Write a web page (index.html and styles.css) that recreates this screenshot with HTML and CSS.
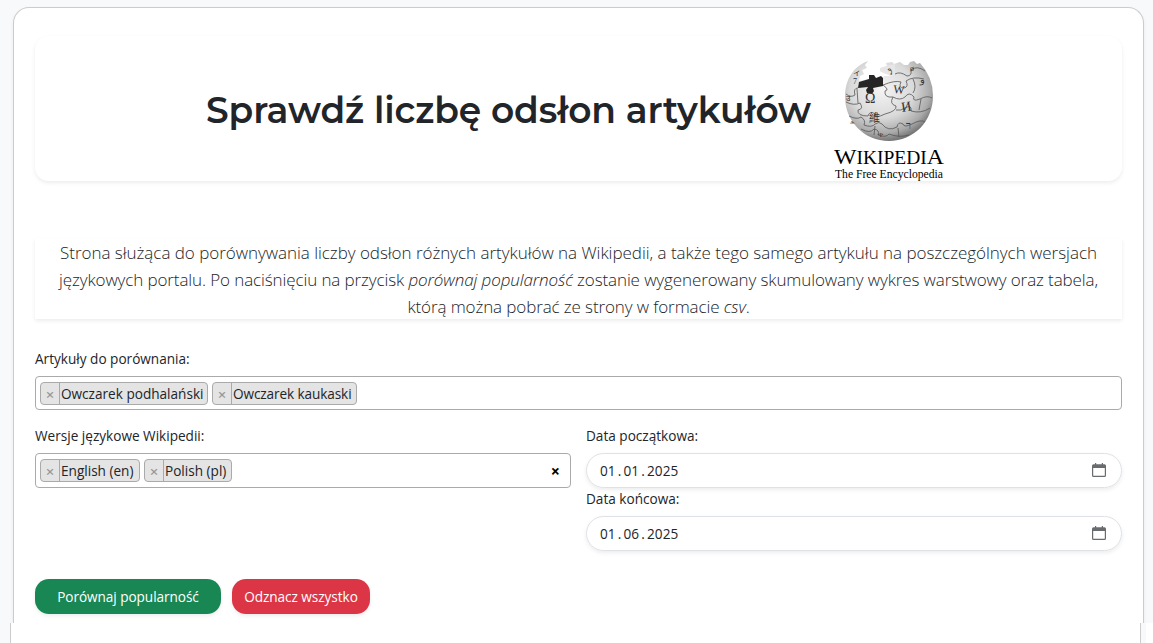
FILE: index.html
```html
<!DOCTYPE html>
<html lang="pl">
<head>
<meta charset="utf-8">
<title>Sprawdź liczbę odsłon artykułów</title>
<link rel="stylesheet" href="styles.css">
</head>
<body>
<main class="card">
  <header class="hero">
    <h1 class="title">Sprawdź liczbę odsłon artykułów</h1>
    <svg class="logo" width="112" height="124" viewBox="0 0 112 124" role="img" aria-label="Wikipedia">
      <defs>
        <radialGradient id="globe" cx="42%" cy="35%" r="65%">
          <stop offset="0" stop-color="#f4f4f4"/><stop offset=".55" stop-color="#dadada"/><stop offset=".85" stop-color="#aaa"/><stop offset="1" stop-color="#777"/>
        </radialGradient>
      </defs>
      <path d="M34 3L31 7L33 10L28 12L30 16L26 18L25 23L35 21L48 22L50 18L57 18L61 16L61 14L55 15L52 16L46 13L47 10L53 8L52 5L58 4L60 6L66 4L70 7L74 7L76 4L80 3L83 6L86 5Q99 19 99 38C99 63 80 83 55 83C30 83 11 63 11 39C11 21 20 8 34 3Z" fill="url(#globe)"/>
      <path d="M57 18L61 16L61 6L53 8L46 10L46 13L52 16Z" fill="#e6e6e6"/>
      <path d="M25 24L35 21L35 17L40 17L42 20L47 18L49 20L49 28L39 30L40 33L38 36L33 35L32 32L34 29L24 30Z" fill="#252525"/>
      <g class="seams" transform="translate(-1 1)">
        <path d="M13 35Q18 39 22 36Q20 29 25 29M50 26Q62 21 68 23Q65 29 71 29Q76 28 73 22Q80 17 91 20M62 15Q67 12 74 17Q79 17 78 11Q84 6 92 12"/>
        <path d="M13 43Q21 47 27 44Q31 50 25 51Q24 57 35 57Q37 51 42 55Q42 60 52 55Q64 52 63 47Q56 45 60 38Q51 39 52 32Q57 31 50 26"/>
        <path d="M60 38Q67 42 72 38Q76 32 81 38Q79 43 87 40Q94 36 99 39M63 51Q68 52 72 49Q79 45 78 52Q88 55 97 49"/>
        <path d="M16 57Q24 61 28 58Q33 61 31 66Q39 69 42 65Q46 62 49 65Q55 73 64 68Q65 62 70 65Q71 69 79 65Q88 60 92 63"/>
        <path d="M28 70Q37 75 41 70Q47 71 45 76Q53 79 56 75Q66 79 76 76M80 20Q84 28 80 34M42 67L41 76M88 40L86 51M65 69L66 78M24 30L25 44"/>
      </g>
      <g class="glyphs">
        <text x="31" y="45" font-size="14">Ω</text><text x="59" y="35" font-size="12" transform="rotate(5 59 35)">W</text>
        <text x="68" y="54" font-size="14" transform="rotate(-9 68 54)">И</text><text x="35" y="64" font-size="11" class="cjk">維</text>
        <text x="54" y="17" font-size="8">วิ</text><text x="76" y="13" font-size="8">ø</text><text x="86" y="25" font-size="10">و</text>
        <text x="72" y="71" font-size="10">ר</text><text x="19" y="17" font-size="8">ィ</text><text x="12" y="43" font-size="8">उ</text><text x="16" y="66" font-size="7">க</text><text x="44" y="79" font-size="7">ጥ</text><text x="19" y="26" font-size="8">7</text>
      </g>
      <g class="wordmark"><text x="0" y="105.5" textLength="110" lengthAdjust="spacingAndGlyphs"><tspan font-size="22">W</tspan><tspan font-size="18">IKIPEDI</tspan><tspan font-size="22">A</tspan></text></g>
      <text class="tagline" x="1" y="119.5" textLength="108" lengthAdjust="spacingAndGlyphs">The Free Encyclopedia</text>
    </svg>
  </header>
  <p class="intro"><span class="line l1">Strona służąca do porównywania liczby odsłon różnych artykułów na Wikipedii, a także tego samego artykułu na poszczególnych wersjach</span><span class="line l2">językowych portalu. Po naciśnięciu na przycisk <em>porównaj popularność</em> zostanie wygenerowany skumulowany wykres warstwowy oraz tabela,</span><span class="line l3">którą można pobrać ze strony w formacie <em>csv</em>.</span></p>
  <form class="form">
    <div class="field articles">
      <label class="label">Artykuły do porównania:</label>
      <div class="select short">
        <span class="tag podh"><span class="remove">×</span><span class="name">Owczarek podhalański</span></span>
        <span class="tag kauk"><span class="remove">×</span><span class="name">Owczarek kaukaski</span></span>
      </div>
    </div>
    <div class="columns">
      <div class="field">
        <label class="label">Wersje językowe Wikipedii:</label>
        <div class="select">
          <span class="tag eng"><span class="remove">×</span><span class="name">English (en)</span></span>
          <span class="tag pol"><span class="remove">×</span><span class="name">Polish (pl)</span></span>
          <span class="clear">×</span>
        </div>
      </div>
      <div class="field">
        <label class="label">Data początkowa:</label>
        <div class="date"><span class="digits"><span>01</span><i>.</i><span>01</span><i>.</i><span>2025</span></span>
          <svg class="calendar" width="14" height="15" viewBox="0 0 14 15"><path fill-rule="evenodd" d="M3 0h1.2v1.2h5.6V0H11v1.2h1.5Q14 1.2 14 2.7v9.8Q14 14 12.5 14h-11Q0 14 0 12.5V2.7Q0 1.2 1.5 1.2H3zM1.2 5v7.3q0 .5.5.5h10.6q.5 0 .5-.5V5z"/></svg>
        </div>
        <label class="label">Data końcowa:</label>
        <div class="date"><span class="digits"><span>01</span><i>.</i><span>06</span><i>.</i><span>2025</span></span>
          <svg class="calendar" width="14" height="15" viewBox="0 0 14 15"><path fill-rule="evenodd" d="M3 0h1.2v1.2h5.6V0H11v1.2h1.5Q14 1.2 14 2.7v9.8Q14 14 12.5 14h-11Q0 14 0 12.5V2.7Q0 1.2 1.5 1.2H3zM1.2 5v7.3q0 .5.5.5h10.6q.5 0 .5-.5V5z"/></svg>
        </div>
      </div>
    </div>
    <div class="actions">
      <button type="button" class="btn compare">Porównaj popularność</button>
      <button type="button" class="btn reset">Odznacz wszystko</button>
    </div>
  </form>
</main>
<section class="next"><div class="next-card"></div></section>
</body>
</html>
```

FILE: styles.css
```css
* { box-sizing: border-box; }
body { margin: 0; height: 643px; overflow: hidden; padding-top: 7px; background: #f8f9fa; color: #212529; font: 13.6px/21px "Open Sans", "Noto Sans", sans-serif; }
.card { width: 1131px; height: 616px; margin-left: 13px; padding: 28px 21px 0; background: #fff; border: 1px solid #ccc; border-bottom: 0; border-radius: 16px 16px 0 0; box-shadow: 0 2px 4px rgba(0,0,0,.06); }
.hero { display: flex; height: 145px; padding: 0 0 0 171px; border-radius: 14px; box-shadow: 0 2px 4px rgba(0,0,0,.075); }
.title { flex: none; width: 628px; margin: 52px 0 0; font: 600 36px/44px Montserrat, Inter, sans-serif; letter-spacing: -.1px; white-space: nowrap; }
.logo { flex: none; margin-top: 22px; }
.seams path { fill: none; stroke: #555; stroke-width: .8; }
.glyphs { fill: #333; font-family: "Liberation Serif", "Noto Sans", "Noto Sans CJK TC", serif; }
.wordmark { fill: #000; font-family: "Liberation Serif", serif; }
.tagline { fill: #000; font: 11.5px "Liberation Serif", serif; }
.intro { height: 81px; margin: 57px 0 0; padding-top: 1px; text-align: center; font-size: 17px; font-weight: 300; line-height: 27px; box-shadow: 0 2px 4px rgba(0,0,0,.075); white-space: nowrap; }
.line { display: block; }
.l1 { letter-spacing: -.03px; }
.l2, .l3 { letter-spacing: -.11px; }
.label { display: block; height: 21px; margin-bottom: 7px; white-space: nowrap; }
.articles { margin-top: 29px; }
.select { display: flex; gap: 4px; height: 35px; padding: 5px 4px; border: 1px solid #aaa; border-radius: 4px; }
.select.short { height: 34px; }
.tag { display: flex; height: 23px; background: #e4e4e4; border: 1px solid #aaa; border-radius: 4px; line-height: 22px; white-space: nowrap; }
.podh { width: 168px; }
.kauk { width: 145px; letter-spacing: -.1px; }
.eng { width: 100px; }
.pol { width: 88px; }
.remove { flex: none; width: 19px; padding-top: 1px; border-right: 1px solid #aaa; text-align: center; color: #999; font-size: 15px; font-weight: 600; line-height: 21px; }
.name { padding-left: 1px; }
.clear { margin: 2px 6px 0 auto; color: #000; font-size: 16px; font-weight: 700; }
.columns { display: grid; grid-template-columns: 536px 536px; gap: 15px; margin-top: 15px; }
.date { display: flex; align-items: center; justify-content: space-between; height: 35px; padding: 0 15px 0 13px; border: 1px solid #dee2e6; border-radius: 18px; box-shadow: 0 2px 4px rgba(0,0,0,.075); }
.digits { display: flex; }
.digits i { width: 8px; text-align: center; font-style: normal; }
.calendar { fill: #696c6f; }
.actions { display: flex; gap: 11px; margin-top: 28px; }
.btn { height: 35px; padding: 0; border: 0; border-radius: 14px; color: #fff; font: inherit; letter-spacing: -.05px; white-space: nowrap; box-shadow: 0 2px 4px rgba(0,0,0,.075); }
.compare { width: 186px; background: #198754; }
.reset { width: 138px; background: #dc3545; }
.next { height: 20px; background: #fff; border-left: 10px solid #f8f9fa; }
.next-card { width: 1131px; height: 20px; background: #fff; border: solid #ccc; border-width: 0 1px; box-shadow: 5px 0 #f8f9fa; }
```
